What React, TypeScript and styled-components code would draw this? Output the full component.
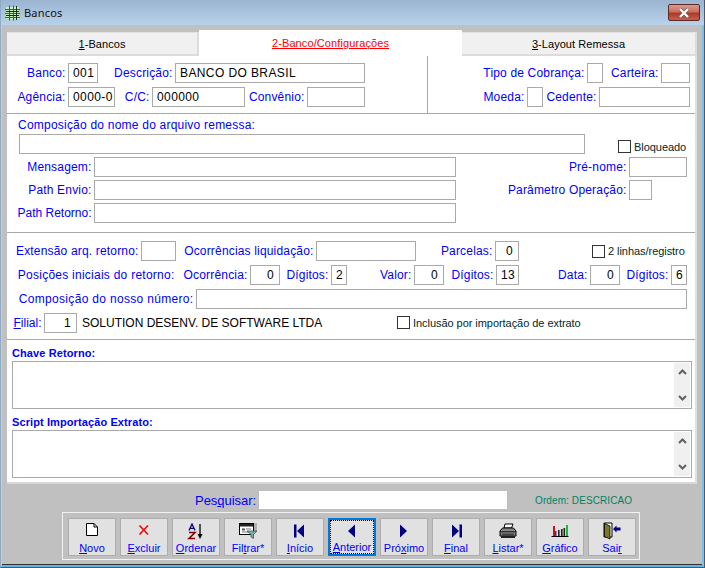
import React from "react";
import styled, { createGlobalStyle } from "styled-components";

const Global = createGlobalStyle`
  html, body { margin: 0; padding: 0; background: #c0c0c0; }
  * { box-sizing: border-box; }
`;
const Win = styled.div`
  width: 705px; height: 568px; display: flex; flex-direction: column; overflow: hidden;
  font-family: "Liberation Sans", Arial, sans-serif; font-size: 12px; background: #c0c0c0;
  border: 1px solid #4a5a6a; border-top: 0; border-left: 1px solid #8fa9c4;
`;
const TitleBar = styled.div`
  height: 25px; flex: none; display: flex; align-items: center; padding: 0 4px 0 3px;
  background: linear-gradient(#9bb4cf, #b9d2ec);
`;
const TitleText = styled.span`
  font-family: "Noto Sans", sans-serif; font-size: 11px; letter-spacing: 0.2px; color: #111; margin-left: 3px; flex: 1;
`;
const CloseBtn = styled.div`
  width: 32px; height: 17px; border: 1px solid #5b2a24; border-radius: 2px; display: flex; align-items: center; justify-content: center;
  background: linear-gradient(#d99a8c 0, #cc7060 45%, #ad3a28 55%, #c4604c 100%);
`;
const Body = styled.div`
  flex: 1; display: flex; flex-direction: column; border-left: 1px solid #b9d1e8; border-right: 2px solid #7fc0e6; border-bottom: 2px solid #5cb8dc; padding: 5px 0 0 5px; box-shadow: inset 0 -1px 0 #333;
`;
const Tabs = styled.div`
  display: flex; align-items: flex-end; height: 26px; flex: none; width: 690px;
`;
const Tab = styled.div<{ $w: number; $active?: boolean }>`
  width: ${(p) => p.$w}px; display: flex; align-items: center; justify-content: center;
  height: ${(p) => (p.$active ? 26 : 24)}px;
  padding-bottom: ${(p) => (p.$active ? 2 : 0)}px;
  background: ${(p) => (p.$active ? "#fff" : "#f0f0f0")};
  border-top: 1px solid ${(p) => (p.$active ? "#fff" : "#e3e3e3")};
  border-bottom: ${(p) => (p.$active ? "0" : "2px solid #dcdcdc")};
  border-right: ${(p) => (p.$active ? "0" : "2px solid #dcdcdc")};
  color: ${(p) => (p.$active ? "#ff0000" : "#000")};
  font-size: 11px; letter-spacing: ${(p) => (p.$active ? 0.1 : 0.05)}px;
  text-decoration: ${(p) => (p.$active ? "underline" : "none")};
`;
const Panel = styled.div`
  width: 690px; height: 428px; flex: none; background: #fff; border-right: 2px solid #e0e0e0; border-bottom: 2px solid #d8d8d8; display: flex; flex-direction: column;
`;
const TopSection = styled.div`
  display: flex; height: 58px; flex: none; border-bottom: 1px solid #aaa;
`;
const TopCol = styled.div<{ $w?: number }>`
  ${(p) => (p.$w ? `width: ${p.$w}px; border-right: 1px solid #aaa;` : "flex: 1;")}
  padding-top: 7px; display: flex; flex-direction: column; gap: 4px;
`;
const Section = styled.div<{ $h: number; $pt?: number; $line?: boolean }>`
  height: ${(p) => p.$h}px; flex: none; padding-top: ${(p) => p.$pt ?? 0}px;
  border-bottom: ${(p) => (p.$line ? "1px solid #aaa" : "0")};
  display: flex; flex-direction: column;
`;
const Row = styled.div<{ $mb?: number; $ml?: number; $h?: number }>`
  display: flex; align-items: center; height: ${(p) => p.$h ?? 20}px; flex: none;
  margin-bottom: ${(p) => p.$mb ?? 0}px; margin-left: ${(p) => p.$ml ?? 0}px;
`;
const Label = styled.label<{ $w: number; $ls?: number }>`
  width: ${(p) => p.$w}px; flex: none; display: flex; justify-content: flex-end; padding-right: 2.5px; color: #0000ff; white-space: nowrap;
  font-size: 12px; letter-spacing: ${(p) => p.$ls ?? 0.17}px;
`;
const Input = styled.input<{ $w: number; $right?: boolean }>`
  width: ${(p) => p.$w}px; height: 20px; flex: none; border: 1px solid #aaa; outline: 0; background: #fff; margin: 0;
  padding: ${(p) => (p.$right ? "0 5px 0 0" : "0 0 0 4px")}; color: #000; border-radius: 0;
  font: 12px "Liberation Sans", Arial, sans-serif; letter-spacing: 0.4px; text-align: ${(p) => (p.$right ? "right" : "left")};
`;
const Heading = styled.div<{ $ml: number; $mt: number; $h: number; $bold?: boolean }>`
  margin-left: ${(p) => p.$ml}px; margin-top: ${(p) => p.$mt}px; height: ${(p) => p.$h}px; color: #0000ff; line-height: 14px; flex: none;
  font-size: ${(p) => (p.$bold ? 11 : 12)}px; font-weight: ${(p) => (p.$bold ? 700 : 400)};
  letter-spacing: ${(p) => (p.$bold ? 0.1 : 0.22)}px;
`;
const Check = styled.span<{ $ml: number; $mt?: number }>`
  width: 13px; height: 13px; border: 1px solid #333; background: #fff; flex: none; margin-left: ${(p) => p.$ml}px;
  margin-top: ${(p) => p.$mt ?? 0}px;
`;
const CheckText = styled.span<{ $mt?: number }>`
  font-size: 11px; margin-left: 3px; color: #002a2a; white-space: nowrap; letter-spacing: -0.05px; margin-top: ${(p) => p.$mt ?? 0}px;
`;
const Plain = styled.span<{ $w: number }>`
  width: ${(p) => p.$w}px; margin-left: 5px; color: #000; flex: none; white-space: nowrap;
`;
const Memo = styled.div`
  width: 680px; height: 48px; margin-left: 5px; border: 1px solid #aaa; background: #fff; flex: none; display: flex; justify-content: flex-end; padding: 1px;
`;
const Scroll = styled.div`
  width: 16px; background: #f0f0f0; display: flex; flex-direction: column; justify-content: space-between; align-items: center; padding: 6px 0;
`;
const Footer = styled.div`
  flex: 1; display: flex; flex-direction: column; margin-left: -5px; padding-top: 7px;
`;
const SearchRow = styled.div`
  display: flex; align-items: center; height: 18px; flex: none;
`;
const SearchLabel = styled.span`
  width: 257px; text-align: right; padding-right: 3px; color: #0000ff; font-size: 13px; letter-spacing: -0.05px;
`;
const SearchBox = styled.div`
  width: 248px; height: 18px; background: #fff; flex: none;
`;
const Order = styled.span`
  margin-left: 28px; color: #008060; font-size: 10px; letter-spacing: 0.1px;
`;
const Toolbar = styled.div`
  width: 578px; height: 48px; margin: 3px 0 0 60px; border: 1px solid #f2f2f2; padding: 5px 0 0 5px; display: flex; gap: 4px; flex: none;
`;
const Btn = styled.div<{ $focus?: boolean }>`
  width: 48px; height: 38px; flex: none; background: #e1e1e1;
  border: ${(p) => (p.$focus ? "2px solid #0078d7" : "1px solid #adadad")};
  display: flex; flex-direction: column; align-items: center; padding-top: ${(p) => (p.$focus ? 1 : 2)}px;
  color: #0000ff; font-size: 11px; white-space: nowrap;
  ${(p) => (p.$focus ? "outline: 1px dotted #000; outline-offset: -3px;" : "")}
`;
const BtnIcon = styled.div`
  height: 20px; display: flex; align-items: center; justify-content: center;
`;
const BtnText = styled.span`
  line-height: 13px; margin-top: 1px;
`;
const Chevron = ({ up }: { up?: boolean }) => (
  <svg width="9" height="6" viewBox="0 0 9 6"><path d={up ? "M1 5 L4.5 1.5 L8 5" : "M1 1 L4.5 4.5 L8 1"} fill="none" stroke="#606060" strokeWidth="2" /></svg>
);
const Nav = ({ d }: { d: string }) => (
  <svg width="16" height="16" viewBox="0 0 16 16"><path d={d} fill="#000080" /></svg>
);
const icons: Record<string, React.ReactNode> = {
  novo: <svg width="16" height="16" viewBox="0 0 16 16"><path d="M2.5 0.5 H10 L13.5 4 V12.5 H2.5 Z" fill="#fff" stroke="#000" /><path d="M10 0.5 V4 H13.5" fill="none" stroke="#000" /></svg>,
  excluir: <svg width="16" height="16" viewBox="0 0 16 16"><path d="M3.5 2.5 L12 11.5 M12 2.5 L3.5 11.5" stroke="#f01010" strokeWidth="1.8" /></svg>,
  ordenar: <svg width="20" height="17" viewBox="0 0 20 17">
    <path d="M3 7.5 L6 1 L9 7.5 M4.2 5.4 H7.8" fill="none" stroke="#000080" strokeWidth="1.3" />
    <path d="M3 9.5 H9 L3 15.5 H9" fill="none" stroke="#800000" strokeWidth="1.6" />
    <path d="M14 1 V13" stroke="#000" strokeWidth="1.3" /><path d="M11.5 11 H16.5 L14 16 Z" fill="#000" /></svg>,
  filtrar: <svg width="18" height="16" viewBox="0 0 18 16">
    <rect x="15" y="0" width="3" height="8" fill="#b0b0b0" />
    <rect x="0.5" y="0.5" width="14" height="11" fill="#fff" stroke="#000" /><rect x="1" y="1" width="13" height="2.5" fill="#222" />
    <rect x="3" y="5.5" width="3" height="2" fill="#555" /><rect x="7" y="5.5" width="5" height="1" fill="#777" /><rect x="3" y="8.5" width="9" height="1" fill="#777" />
    <path d="M8 8 H18 L14.5 11.5 V15.5 L12 14 V11.5 Z" fill="#7fb0a8" stroke="#205050" strokeWidth="0.7" /></svg>,
  inicio: <Nav d="M2 1.5 H4.5 V14.5 H2 Z M12 1.5 V14.5 L5 8 Z" />,
  anterior: <Nav d="M11 1.5 V14.5 L4 8 Z" />,
  proximo: <Nav d="M4 1.5 V14.5 L11 8 Z" />,
  final: <Nav d="M4 1.5 V14.5 L11 8 Z M11.5 1.5 H14 V14.5 H11.5 Z" />,
  listar: <svg width="18" height="16" viewBox="0 0 18 16">
    <path d="M6 1 L14 1 L12.5 5 H5 Z" fill="#fff" stroke="#000" />
    <path d="M1 8 L3.5 5 H14.5 L17 8 V13 H1 Z" fill="#888" stroke="#000" /><rect x="1" y="8" width="16" height="1.4" fill="#333" />
    <rect x="3" y="10.5" width="12" height="2" fill="#444" /><rect x="2" y="13" width="14" height="2" fill="#222" /></svg>,
  grafico: <svg width="18" height="16" viewBox="0 0 18 16">
    <rect x="2" y="3" width="2" height="10" fill="#d01010" /><rect x="4" y="8" width="1.5" height="5" fill="#2040c0" /><rect x="7" y="7" width="1.6" height="6" fill="#222" /><rect x="10" y="6" width="1.6" height="7" fill="#222" />
    <rect x="12.5" y="5" width="1.6" height="8" fill="#222" /><rect x="15" y="2" width="2" height="11" fill="#10c030" />
    <rect x="0.5" y="13" width="17" height="1" fill="#000" /></svg>,
  sair: <svg width="18" height="18" viewBox="0 0 18 18">
    <path d="M1 1 H9 V15 H1 Z" fill="#fff" stroke="#000" /><path d="M1.5 1.5 L7 4 V17 L1.5 14.5 Z" fill="#7a7a20" stroke="#000" strokeWidth="0.8" />
    <path d="M17.5 5.5 H13.5 V3.5 L10 7 L13.5 10.5 V8.5 H17.5 Z" fill="#000080" /></svg>,
};
const TitleIcon = () => (
  <svg width="17" height="17" viewBox="0 0 17 17">
    <rect x="2" y="3" width="13" height="12" fill="#c8f0c0" />
    <path d="M1 5.5 H16 M1 9.5 H16 M1 13.5 H16 M5.5 1.5 V16.5 M9.5 1.5 V16.5" stroke="#0a7a2a" strokeWidth="1" fill="none" />
    <path d="M2 7.5 H15 M2 11.5 H15 M12.5 2 V16" stroke="#103020" strokeWidth="1" />
  </svg>
);
const CloseIcon = () => (
  <svg width="14" height="10" viewBox="0 0 14 10"><path d="M3 1 L11 9 M11 1 L3 9" stroke="#6a5a58" strokeWidth="3.4" /><path d="M3 1 L11 9 M11 1 L3 9" stroke="#fff" strokeWidth="2.2" /></svg>
);

const F = ({ l, w, iw, v, r, ls }: { l: React.ReactNode; w: number; iw: number; v?: string; r?: boolean; ls?: number }) => (
  <>
    <Label $w={w} $ls={ls}>{l}</Label>
    <Input $w={iw} $right={r} readOnly value={v ?? ""} />
  </>
);

const buttons: { k: string; t: React.ReactNode; focus?: boolean }[] = [
  { k: "novo", t: <><u>N</u>ovo</> },
  { k: "excluir", t: <><u>E</u>xcluir</> },
  { k: "ordenar", t: <><u>O</u>rdenar</> },
  { k: "filtrar", t: <>Fil<u>t</u>rar*</> },
  { k: "inicio", t: <><u>I</u>nício</> },
  { k: "anterior", t: <><u>A</u>nterior</>, focus: true },
  { k: "proximo", t: <>Pró<u>x</u>imo</> },
  { k: "final", t: <><u>F</u>inal</> },
  { k: "listar", t: <><u>L</u>istar*</> },
  { k: "grafico", t: <><u>G</u>ráfico</> },
  { k: "sair", t: <>Sai<u>r</u></> },
];

export default function App() {
  return (
    <Win>
      <Global />
      <TitleBar>
        <TitleIcon />
        <TitleText>Bancos</TitleText>
        <CloseBtn><CloseIcon /></CloseBtn>
      </TitleBar>
      <Body>
        <Tabs>
          <Tab $w={192}><span><u>1</u>-Bancos</span></Tab>
          <Tab $w={263} $active>2-Banco/Configurações</Tab>
          <Tab $w={235}><span><u>3</u>-Layout Remessa</span></Tab>
        </Tabs>
        <Panel>
          <TopSection>
            <TopCol $w={421}>
              <Row><F l="Banco:" w={61} iw={30} v="001" /><F l="Descrição:" w={77} iw={190} v="BANCO DO BRASIL" /></Row>
              <Row><F l="Agência:" w={61} iw={47} v="0000-0" /><F l="C/C:" w={37} iw={93} v="000000" /><F l="Convênio:" w={62} iw={58} /></Row>
            </TopCol>
            <TopCol>
              <Row><F l="Tipo de Cobrança:" w={159} iw={16} /><F l="Carteira:" w={58} iw={29} /></Row>
              <Row><F l="Moeda:" w={99} iw={16} /><F l="Cedente:" w={56} iw={91} /></Row>
            </TopCol>
          </TopSection>
          <Section $h={119} $line>
            <Heading $ml={11} $mt={4} $h={16}>Composição do nome do arquivo remessa:</Heading>
            <Row $ml={12} $mb={3}>
              <Input $w={566} readOnly value="" />
              <Check $ml={33} $mt={5} />
              <CheckText $mt={5}>Bloqueado</CheckText>
            </Row>
            <Row $mb={3}><F l="Mensagem:" w={87} iw={362} /><F l="Pré-nome:" w={173} iw={58} /></Row>
            <Row $mb={3}><F l="Path Envio:" w={87} iw={362} /><F l="Parâmetro Operação:" w={173} iw={23} /></Row>
            <Row><F l="Path Retorno:" w={87} iw={362} ls={0} /></Row>
          </Section>
          <Section $h={107} $pt={8} $line>
            <Row $mb={4}>
              <F l="Extensão arq. retorno:" w={134} iw={35} /><F l="Ocorrências liquidação:" w={140} iw={100} /><F l="Parcelas:" w={79} iw={24} v="0" r />
              <Check $ml={73} /><CheckText>2 linhas/registro</CheckText>
            </Row>
            <Row $mb={4}>
              <Label $w={170} $ls={0.25}>Posições iniciais do retorno:</Label>
              <F l="Ocorrência:" w={73} iw={30} v="0" r /><F l="Dígitos:" w={51} iw={16} v="2" />
              <F l="Valor:" w={67} iw={30} v="0" r /><F l="Dígitos:" w={52} iw={23} v="13" />
              <F l="Data:" w={71} iw={30} v="0" r /><F l="Dígitos:" w={51} iw={16} v="6" />
            </Row>
            <Row $mb={4}><F l="Composição do nosso número:" w={189} iw={491} ls={0.32} /></Row>
            <Row $h={19}>
              <Label $w={37} $ls={0}><span><u>F</u>ilial:</span></Label>
              <Input $w={33} $right readOnly value="1" />
              <Plain $w={315}>SOLUTION DESENV. DE SOFTWARE LTDA</Plain>
              <Check $ml={0} /><CheckText>Inclusão por importação de extrato</CheckText>
            </Row>
          </Section>
          <Section $h={144}>
            <Heading $ml={5} $mt={6} $h={15} $bold>Chave Retorno:</Heading>
            <Memo><Scroll><Chevron up /><Chevron /></Scroll></Memo>
            <Heading $ml={5} $mt={6} $h={15} $bold>Script Importação Extrato:</Heading>
            <Memo><Scroll><Chevron up /><Chevron /></Scroll></Memo>
          </Section>
        </Panel>
        <Footer>
          <SearchRow>
            <SearchLabel>Pes<u>q</u>uisar:</SearchLabel>
            <SearchBox />
            <Order>Ordem: DESCRICAO</Order>
          </SearchRow>
          <Toolbar>
            {buttons.map((b) => (
              <Btn key={b.k} $focus={b.focus}>
                <BtnIcon>{icons[b.k]}</BtnIcon>
                <BtnText>{b.t}</BtnText>
              </Btn>
            ))}
          </Toolbar>
        </Footer>
      </Body>
    </Win>
  );
}
